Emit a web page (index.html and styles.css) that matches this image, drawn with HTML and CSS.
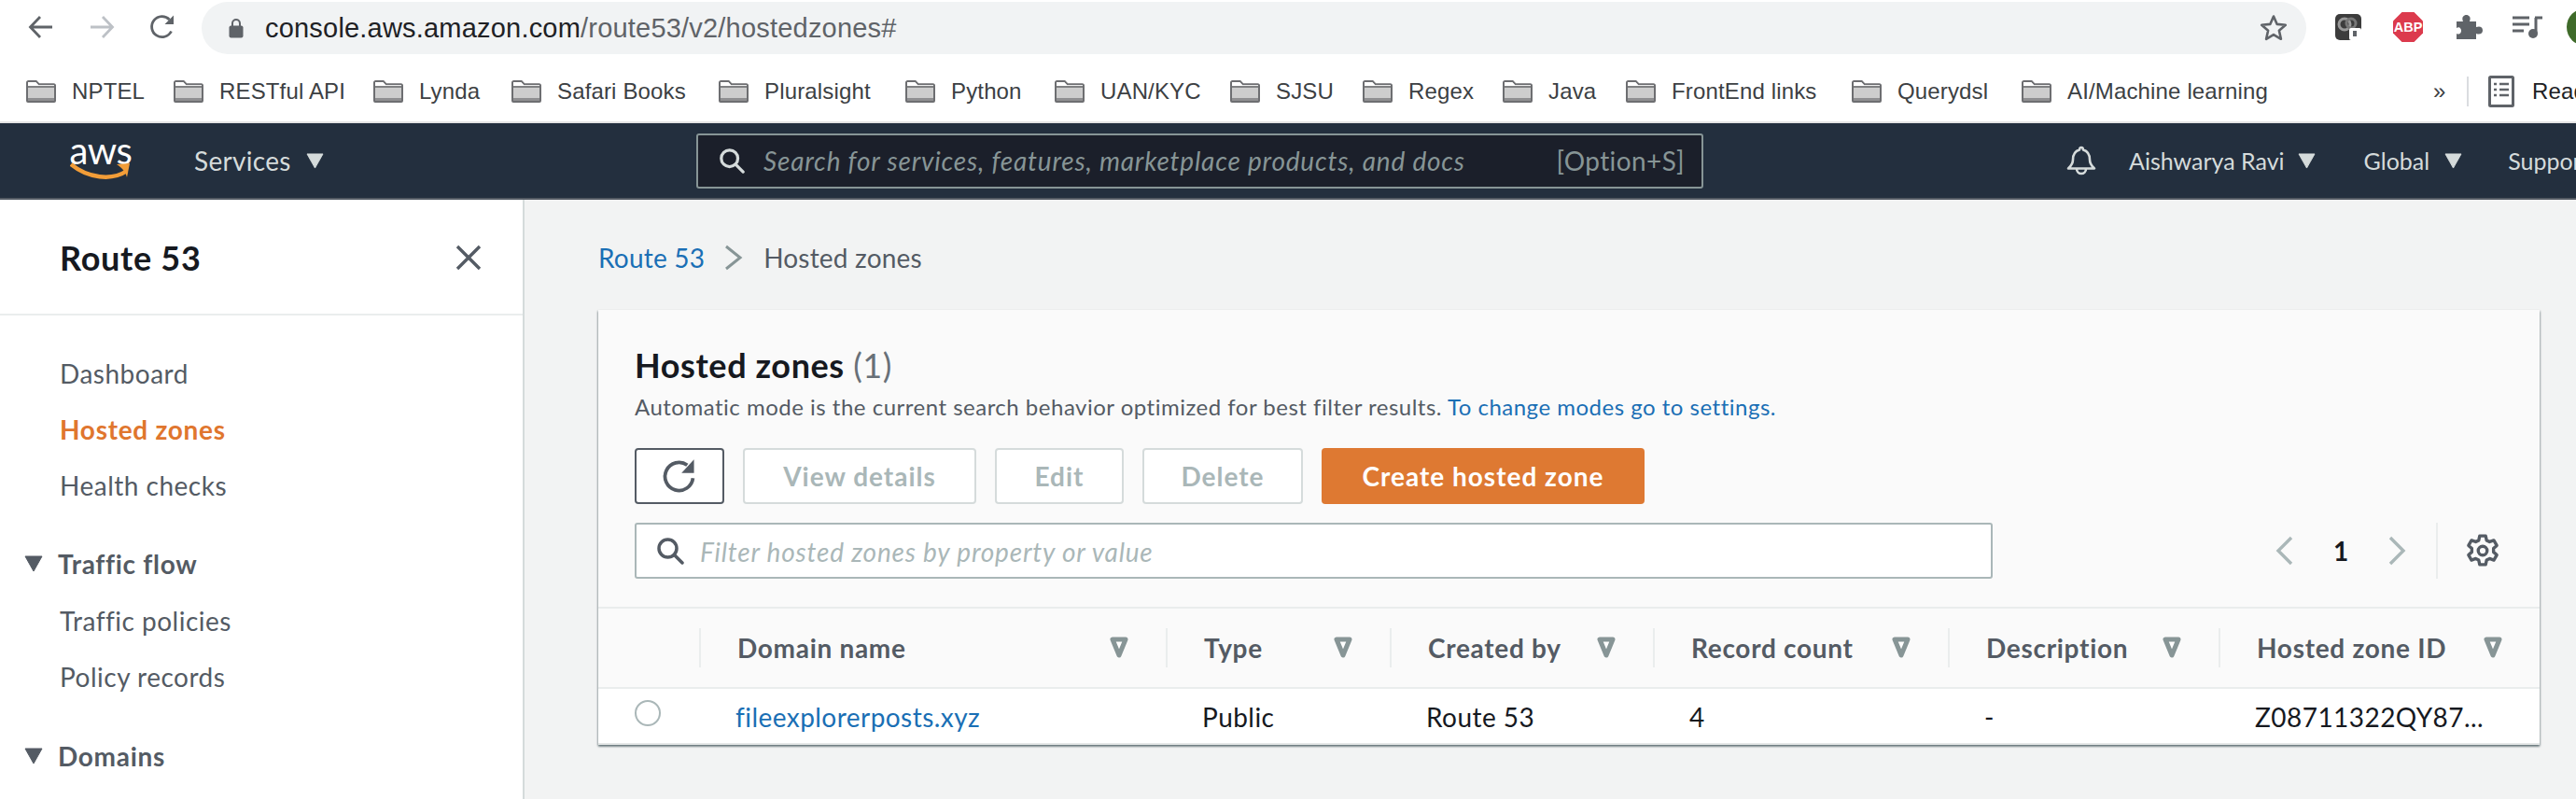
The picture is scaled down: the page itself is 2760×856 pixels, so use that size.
FILE: index.html
```html
<!DOCTYPE html>
<html lang="en">
<head>
<meta charset="utf-8">
<title>Route 53 - Hosted zones</title>
<link rel="stylesheet" href="styles.css">
</head>
<body>
<svg class="defs" width="0" height="0" aria-hidden="true">
  <defs>
    <symbol id="folder" viewBox="0 0 32 24">
      <path d="M1 22V2.500C1 1.600 1.600 1 2.500 1h8.200l3 3.200h15.800c.9 0 1.500.6 1.500 1.500V22c0 .6-.4 1-1 1H2c-.6 0-1-.4-1-1z" fill="#cdcdcd" stroke="#6d6e71" stroke-width="2"/>
      <path d="M2 2h8.300l3 3.200H30V6H2z" fill="#fff"/>
      <path d="M2 7h28" stroke="#6d6e71" stroke-width="1.600"/>
      <path d="M2 19h28v3H2z" fill="#8f8f91"/>
    </symbol>
    <symbol id="sort" viewBox="0 0 20 24">
      <path d="M3 3h14L10 20z" fill="#fff" stroke="#879596" stroke-width="5" stroke-linejoin="round"/>
    </symbol>
    <symbol id="mag" viewBox="0 0 30 30">
      <circle cx="12.500" cy="12.500" r="9.500" fill="none" stroke="currentColor" stroke-width="3.500"/>
      <path d="M19.500 19.500 28 28" stroke="currentColor" stroke-width="3.500" stroke-linecap="round"/>
    </symbol>
    <symbol id="tri" viewBox="0 0 20 18">
      <path d="M1 1h18L10 17z" fill="currentColor" stroke="currentColor" stroke-linejoin="round"/>
    </symbol>
  </defs>
</svg>

<header class="toolbar">
  <svg class="tb-icon tb-back" viewBox="0 0 28 28"><path d="M26 14H3M13 3 2.500 14 13 25" fill="none" stroke="#5f6368" stroke-width="2.800"/></svg>
  <svg class="tb-icon tb-forward" viewBox="0 0 28 28"><path d="M2 14h23M15 3l10.500 11L15 25" fill="none" stroke="#bdc1c6" stroke-width="2.800"/></svg>
  <svg class="tb-icon tb-reload" viewBox="0 0 28 28"><path d="M23.500 18.500A11 11 0 1 1 21.500 6" fill="none" stroke="#5f6368" stroke-width="2.800"/><path d="M26 1.500V11h-9.500z" fill="#5f6368"/></svg>
  <div class="omnibox">
    <svg class="lock" viewBox="0 0 16 22"><path d="M4 9V6a4 4 0 0 1 8 0v3" fill="none" stroke="#5f6368" stroke-width="2"/><rect x="0.500" y="8.500" width="15" height="13" rx="2" fill="#5f6368"/></svg>
    <span class="url"><span class="url-host">console.aws.amazon.com</span>/route53/v2/hostedzones#</span>
    <svg class="star" viewBox="0 0 30 30"><path d="M15 2.500l3.700 8.400 9.100.9-6.900 6 2 9-7.900-4.700-7.900 4.700 2-9-6.900-6 9.100-.9z" fill="none" stroke="#5f6368" stroke-width="2.600" stroke-linejoin="round"/></svg>
  </div>
  <svg class="ext ext-cam" viewBox="0 0 28 28"><rect width="28" height="28" rx="5" fill="#3c3c3c"/><circle cx="10" cy="11" r="6" fill="none" stroke="#999" stroke-width="3"/><circle cx="17" cy="10" r="5" fill="none" stroke="#777" stroke-width="3"/><rect x="15" y="15" width="13" height="13" rx="2" fill="#fff"/><path d="M19 18h4v6h-4z" fill="#5f6368"/></svg>
  <svg class="ext ext-abp" viewBox="0 0 32 32"><path d="M9.500 0h13L32 9.500v13L22.500 32h-13L0 22.500v-13z" fill="#dc3a4d"/><text x="16" y="21" text-anchor="middle" class="abp-text">ABP</text></svg>
  <svg class="ext ext-puzzle" viewBox="0 0 30 26"><path d="M2 7h7c-2-5 1-7 3.500-7S18 2 16 7h7v6c4-1.500 7 0 7 3.500S27 21.500 23 20v6H2v-6c3 1.500 5-.5 5-3s-2-5-5-3z" fill="#5f6368"/></svg>
  <svg class="ext ext-queue" viewBox="0 0 32 24"><path d="M0 2h18M0 9h18M0 16h12" stroke="#5f6368" stroke-width="3"/><path d="M24 2h8M25 2v17" stroke="#5f6368" stroke-width="3"/><ellipse cx="22" cy="19" rx="5" ry="5" fill="#5f6368"/></svg>
  <div class="avatar"></div>
</header>

<nav class="bookmarks">
  <div class="bm-grid">
    <a class="bm"><svg class="bm-folder"><use href="#folder"/></svg>NPTEL</a>
    <a class="bm"><svg class="bm-folder"><use href="#folder"/></svg>RESTful API</a>
    <a class="bm"><svg class="bm-folder"><use href="#folder"/></svg>Lynda</a>
    <a class="bm"><svg class="bm-folder"><use href="#folder"/></svg>Safari Books</a>
    <a class="bm"><svg class="bm-folder"><use href="#folder"/></svg>Pluralsight</a>
    <a class="bm"><svg class="bm-folder"><use href="#folder"/></svg>Python</a>
    <a class="bm"><svg class="bm-folder"><use href="#folder"/></svg>UAN/KYC</a>
    <a class="bm"><svg class="bm-folder"><use href="#folder"/></svg>SJSU</a>
    <a class="bm"><svg class="bm-folder"><use href="#folder"/></svg>Regex</a>
    <a class="bm"><svg class="bm-folder"><use href="#folder"/></svg>Java</a>
    <a class="bm"><svg class="bm-folder"><use href="#folder"/></svg>FrontEnd links</a>
    <a class="bm"><svg class="bm-folder"><use href="#folder"/></svg>Querydsl</a>
    <a class="bm"><svg class="bm-folder"><use href="#folder"/></svg>AI/Machine learning</a>
  </div>
  <span class="bm-more">»</span>
  <span class="bm-sep"></span>
  <svg class="reader" viewBox="0 0 28 34"><rect x="1.500" y="1.500" width="25" height="31" rx="1" fill="none" stroke="#5f6368" stroke-width="3"/><path d="M6 9h3M12 9h10M6 15h3M12 15h10M6 21h3M12 21h10" stroke="#5f6368" stroke-width="2.500"/></svg>
  <span class="bm-read">Reading list</span>
</nav>

<nav class="awsnav">
  <div class="nav-left">
    <div class="logo">
      <span class="logo-word">aws</span>
      <svg class="logo-smile" viewBox="0 0 66 26"><path d="M1 3c18 15 44 18 60 7" fill="none" stroke="#f29d38" stroke-width="4.500"/><path d="M50 3l14-1-3 15c-1-5-4-9-11-14z" fill="#f29d38"/></svg>
    </div>
    <span class="nav-link nav-services">Services</span>
    <svg class="nav-tri"><use href="#tri"/></svg>
  </div>
  <div class="nav-search">
    <svg class="nav-mag"><use href="#mag"/></svg>
    <span class="nav-placeholder">Search for services, features, marketplace products, and docs</span>
    <span class="nav-shortcut">[Option+S]</span>
  </div>
  <div class="nav-right">
    <svg class="bell" viewBox="0 0 32 32"><path d="M16 2c1.500 0 2 1 2 2.500C23 6 25 10 25 15c0 4 1 6 5 9.500H2c4-3.500 5-5.500 5-9.500 0-5 2-9 7-10.500C14 3 14.500 2 16 2zM11 25a5 5 0 0 0 10 0" fill="none" stroke="#d5dbdb" stroke-width="2.600" stroke-linejoin="round"/></svg>
    <span class="nav-link nav-small nav-user">Aishwarya Ravi</span>
    <svg class="nav-tri nav-tri-user"><use href="#tri"/></svg>
    <span class="nav-link nav-small nav-region">Global</span>
    <svg class="nav-tri"><use href="#tri"/></svg>
    <span class="nav-link nav-small nav-support">Support</span>
  </div>
</nav>

<div class="shell">
  <aside class="side">
    <div class="side-head">
      <h2 class="side-title">Route 53</h2>
      <svg class="side-close" viewBox="0 0 28 28"><path d="M2 2l24 24M26 2 2 26" stroke="#545b64" stroke-width="3.400"/></svg>
    </div>
    <ul class="side-list">
      <li class="side-item">Dashboard</li>
      <li class="side-item side-active">Hosted zones</li>
      <li class="side-item">Health checks</li>
      <li class="side-item side-section side-first"><svg class="side-tri"><use href="#tri"/></svg>Traffic flow</li>
      <li class="side-item side-sub">Traffic policies</li>
      <li class="side-item">Policy records</li>
      <li class="side-item side-section side-second"><svg class="side-tri"><use href="#tri"/></svg>Domains</li>
    </ul>
  </aside>

  <main class="main">
    <div class="crumbs">
      <a class="crumb-link">Route 53</a>
      <svg class="crumb-chevron" viewBox="0 0 22 28"><path d="M3 2l15 12L3 26" fill="none" stroke="#879596" stroke-width="3"/></svg>
      <span class="crumb-current">Hosted zones</span>
    </div>

    <section class="card">
      <div class="card-head">
        <h1 class="card-title">Hosted zones <span class="card-count">(1)</span></h1>
        <p class="card-desc">Automatic mode is the current search behavior optimized for best filter results. <a class="link">To change modes go to settings.</a></p>
        <div class="actions">
          <button class="btn btn-refresh"><svg class="refresh-icon" viewBox="0 0 36 36"><path d="M31 20A13.500 13.500 0 1 1 25.500 7.500" fill="none" stroke="#545b64" stroke-width="3.400"/><path d="M32 2v13H20z" fill="#545b64"/></svg></button>
          <button class="btn btn-disabled btn-view">View details</button>
          <button class="btn btn-disabled btn-edit">Edit</button>
          <button class="btn btn-disabled btn-delete">Delete</button>
          <button class="btn btn-primary">Create hosted zone</button>
        </div>
        <div class="filter-row">
          <div class="filter">
            <svg class="filter-mag"><use href="#mag"/></svg>
            <span class="filter-placeholder">Filter hosted zones by property or value</span>
          </div>
          <div class="pager">
            <svg class="pager-chevron" viewBox="0 0 20 32"><path d="M17 2 3 16l14 14" fill="none" stroke="#aab7b8" stroke-width="3.400"/></svg>
            <span class="pager-num">1</span>
            <svg class="pager-chevron" viewBox="0 0 20 32"><path d="M3 2l14 14L3 30" fill="none" stroke="#aab7b8" stroke-width="3.400"/></svg>
          </div>
          <div class="gear-wrap">
            <svg class="gear" viewBox="0 0 34 34"><path d="M14 2h6l1 4.500 3 1.500 4.300-1.500 3 5.200-3.300 3v3.600l3.300 3-3 5.200-4.300-1.500-3 1.500-1 4.500h-6l-1-4.500-3-1.500-4.300 1.500-3-5.200 3.300-3v-3.600l-3.300-3 3-5.200L10 8l3-1.500z" fill="none" stroke="#545b64" stroke-width="3.200" stroke-linejoin="round"/><circle cx="17" cy="17" r="4.500" fill="none" stroke="#545b64" stroke-width="3.200"/></svg>
          </div>
        </div>
      </div>

      <div class="table-row table-header">
        <div class="cell cell-select"></div>
        <div class="cell"><span class="th-label">Domain name</span><svg class="sort"><use href="#sort"/></svg></div>
        <div class="cell"><span class="th-label">Type</span><svg class="sort"><use href="#sort"/></svg></div>
        <div class="cell"><span class="th-label">Created by</span><svg class="sort"><use href="#sort"/></svg></div>
        <div class="cell"><span class="th-label">Record count</span><svg class="sort"><use href="#sort"/></svg></div>
        <div class="cell"><span class="th-label">Description</span><svg class="sort"><use href="#sort"/></svg></div>
        <div class="cell"><span class="th-label">Hosted zone ID</span><svg class="sort"><use href="#sort"/></svg></div>
      </div>
      <div class="table-row table-body">
        <div class="td td-select"><span class="radio"></span></div>
        <div class="td"><a class="link">fileexplorerposts.xyz</a></div>
        <div class="td">Public</div>
        <div class="td">Route 53</div>
        <div class="td">4</div>
        <div class="td">-</div>
        <div class="td">Z08711322QY87...</div>
      </div>
    </section>
  </main>
</div>
</body>
</html>
```

FILE: styles.css
```css
* { box-sizing: border-box; }
html, body { margin: 0; padding: 0; }
body {
  width: 2760px;
  height: 856px;
  overflow: hidden;
  background: #fff;
  font-family: Lato, "Noto Sans", sans-serif;
  color: #16191f;
}
.defs { position: absolute; }
h1, h2, p, ul { margin: 0; padding: 0; }
ul { list-style: none; }

/* Browser toolbar */
.toolbar {
  display: flex;
  align-items: center;
  height: 58px;
  padding-left: 30px;
  overflow: hidden;
  background: #fff;
}
.tb-icon { width: 28px; height: 28px; flex: none; }
.tb-forward { margin-left: 37px; }
.tb-reload { margin-left: 37px; }
.omnibox {
  display: flex;
  align-items: center;
  width: 2255px;
  height: 56px;
  margin: 2px 0 0 28px;
  padding: 0 20px 0 29px;
  border-radius: 28px;
  background: #f1f3f4;
  flex: none;
}
.lock { width: 16px; height: 22px; flex: none; }
.url {
  flex: 1;
  margin-left: 23px;
  font-family: "Liberation Sans", Arial, sans-serif;
  font-size: 29px;
  letter-spacing: .2px;
  color: #5f6368;
}
.url-host { color: #202124; }
.star { width: 30px; height: 30px; flex: none; }
.ext { flex: none; }
.ext-cam { width: 28px; height: 28px; margin-left: 31px; }
.ext-abp { width: 32px; height: 32px; margin-left: 34px; }
.abp-text { font-family: "Liberation Sans", Arial, sans-serif; font-size: 14.500px; font-weight: 700; fill: #fff; }
.ext-puzzle { width: 30px; height: 26px; margin-left: 34px; }
.ext-queue { width: 32px; height: 24px; margin-left: 32px; }
.avatar {
  width: 40px;
  height: 40px;
  margin-left: 26px;
  border-radius: 50%;
  background: #3f6b2a;
  flex: none;
}

/* Bookmarks */
.bookmarks {
  display: flex;
  align-items: center;
  height: 74px;
  padding: 8px 0 0 28px;
  border-bottom: 2px solid #e4e4e4;
  overflow: hidden;
  font-family: "Liberation Sans", Arial, sans-serif;
  font-size: 24px;
  letter-spacing: .15px;
  color: #3c4043;
  white-space: nowrap;
}
.bm-grid {
  display: grid;
  grid-template-columns: 158px 214px 148px 222px 200px 160px 188px 142px 150px 132px 242px 182px 441px;
  flex: none;
}
.bm { display: flex; align-items: center; gap: 17px; }
.bm-folder { width: 32px; height: 24px; flex: none; }
.bm-more { width: 13px; flex: none; }
.bm-sep { width: 2px; height: 32px; margin-left: 23px; background: #dadce0; flex: none; }
.reader { width: 28px; height: 34px; margin-left: 21px; flex: none; }
.bm-read { margin-left: 19px; color: #202124; }

/* AWS nav */
.awsnav {
  display: flex;
  align-items: center;
  height: 82px;
  background: #232f3e;
  border-bottom: 2px solid #545b64;
  overflow: hidden;
  white-space: nowrap;
}
.nav-left {
  display: flex;
  align-items: center;
  width: 746px;
  padding-left: 75px;
  flex: none;
}
.logo { display: flex; flex-direction: column; align-items: center; width: 66px; flex: none; }
.logo-word {
  font-size: 40px;
  line-height: 30px;
  color: #fff;
  letter-spacing: -0.500px;
  height: 28px;
}
.logo-smile { width: 66px; height: 26px; margin-top: -1px; }
.nav-link { font-size: 28px; letter-spacing: .3px; color: #d5dbdb; }
.nav-small { font-size: 25px; letter-spacing: 0; }
.nav-services { margin-left: 67px; }
.nav-tri { width: 19px; height: 17px; margin-left: 16px; color: #d5dbdb; flex: none; }
.nav-tri-user { margin-left: 14px; }
.nav-search {
  display: flex;
  align-items: center;
  width: 1079px;
  height: 59px;
  padding: 0 18px 0 22px;
  border: 2px solid #879596;
  border-radius: 3px;
  background: #1b1f2a;
  flex: none;
}
.nav-mag { width: 28px; height: 30px; color: #d5dbdb; flex: none; }
.nav-placeholder { flex: 1; margin-left: 20px; font-size: 28px; letter-spacing: .8px; font-style: italic; color: #879596; }
.nav-shortcut { font-size: 28px; letter-spacing: .4px; color: #879596; }
.nav-right { display: flex; align-items: center; margin-left: 389px; flex: none; }
.bell { width: 32px; height: 32px; flex: none; }
.nav-user { margin-left: 35px; }
.nav-region { margin-left: 52px; }
.nav-support { margin-left: 49px; }

/* Shell */
.shell { display: flex; height: 642px; background: #f2f3f3; }
.side {
  width: 562px;
  height: 642px;
  overflow: hidden;
  background: #fff;
  border-right: 2px solid #d5dbdb;
  flex: none;
}
.side-head {
  display: flex;
  align-items: flex-start;
  justify-content: space-between;
  height: 124px;
  padding: 42px 44px 0 64px;
  border-bottom: 2px solid #eaeded;
}
.side-title { font-size: 36px; line-height: 40px; letter-spacing: .7px; font-weight: 700; color: #16191f; }
.side-close { width: 28px; height: 28px; margin-top: 6px; }
.side-list { padding-top: 32px; font-size: 28px; letter-spacing: .5px; color: #545b64; }
.side-item { display: flex; align-items: center; height: 60px; padding-left: 64px; }
.side-active { color: #e0762e; font-weight: 700; letter-spacing: .7px; }
.side-section { position: relative; padding-left: 62px; font-weight: 700; letter-spacing: .7px; }
.side-first { margin-top: 24px; }
.side-second { margin-top: 25px; }
.side-sub { margin-top: 1px; }
.side-tri {
  position: absolute;
  left: 26px;
  top: 21px;
  width: 20px;
  height: 18px;
  color: #545b64;
}

/* Main */
.main { flex: 1; padding: 42px 39px 0 79px; min-width: 0; }
.crumbs { display: flex; align-items: center; height: 40px; font-size: 28px; letter-spacing: .2px; }
.crumb-link { color: #1a6fb5; }
.crumb-chevron { width: 22px; height: 28px; margin-left: 20px; }
.crumb-current { margin-left: 21px; color: #545b64; }

.card {
  margin-top: 36px;
  background: #fafafa;
  box-shadow: 0 2px 2px 0 rgba(0, 28, 36, .4), 1px 1px 2px 0 rgba(0, 28, 36, .2), -1px 1px 2px 0 rgba(0, 28, 36, .2);
}
.card-head { height: 320px; padding: 33px 0 0 39px; border-bottom: 2px solid #eaeded; }
.card-title { font-size: 36px; line-height: 52px; letter-spacing: .6px; font-weight: 700; color: #16191f; }
.card-count { font-weight: 400; color: #687078; }
.card-desc { margin-top: 3px; font-size: 24px; line-height: 32px; letter-spacing: .5px; color: #545b64; }
.link { color: #1a6fb5; }
.actions { display: flex; gap: 20px; margin-top: 28px; }
.btn {
  display: flex;
  align-items: center;
  justify-content: center;
  height: 60px;
  padding: 0;
  border-radius: 4px;
  font-family: inherit;
  font-size: 28px;
  letter-spacing: 1px;
  font-weight: 700;
  background: #fff;
}
.btn-refresh { width: 96px; border: 2px solid #545b64; }
.refresh-icon { width: 40px; height: 40px; }
.btn-disabled { border: 2px solid #d5dbdb; color: #aab7b8; }
.btn-view { width: 250px; }
.btn-edit { width: 138px; }
.btn-delete { width: 172px; }
.btn-primary { width: 346px; border: 0; background: #de7932; color: #fff; }

.filter-row { display: flex; align-items: center; margin-top: 20px; height: 60px; }
.filter {
  display: flex;
  align-items: center;
  width: 1455px;
  height: 60px;
  padding-left: 21px;
  border: 2px solid #aab7b8;
  border-radius: 3px;
  background: #fff;
  flex: none;
}
.filter-mag { width: 30px; height: 30px; color: #545b64; flex: none; }
.filter-placeholder { margin-left: 17px; padding-top: 2px; font-size: 28px; letter-spacing: .8px; font-style: italic; color: #aab7b8; }
.pager { display: flex; align-items: center; margin-left: 303px; flex: none; }
.pager-chevron { width: 20px; height: 32px; flex: none; }
.pager-num { width: 100px; text-align: center; font-size: 28px; font-weight: 700; color: #16191f; }
.gear-wrap {
  display: flex;
  align-items: center;
  height: 60px;
  margin-left: 32px;
  padding-left: 30px;
  border-left: 2px solid #eaeded;
}
.gear { width: 36px; height: 36px; }

/* Table */
.table-row { display: grid; grid-template-columns: 108px 500px 240px 282px 316px 290px 344px; }
.table-header { height: 86px; border-bottom: 2px solid #eaeded; align-items: center; }
.cell {
  display: flex;
  align-items: center;
  justify-content: space-between;
  height: 42px;
  padding: 0 40px 0 39px;
  border-left: 2px solid #eaeded;
}
.cell-select { border-left: 0; }
.th-label { font-size: 28px; letter-spacing: .7px; font-weight: 700; color: #545b64; }
.sort { width: 20px; height: 24px; flex: none; }
.table-body { height: 60px; background: #fff; border-bottom: 2px solid #e5e8e8; font-size: 28px; letter-spacing: .45px; align-items: center; }
.td { padding: 2px 0 0 39px; color: #16191f; white-space: nowrap; }
.td-select { padding: 0 0 6px 39px; display: flex; }
.radio {
  width: 28px;
  height: 28px;
  border: 2px solid #aab7b8;
  border-radius: 50%;
  background: #fff;
}
```
